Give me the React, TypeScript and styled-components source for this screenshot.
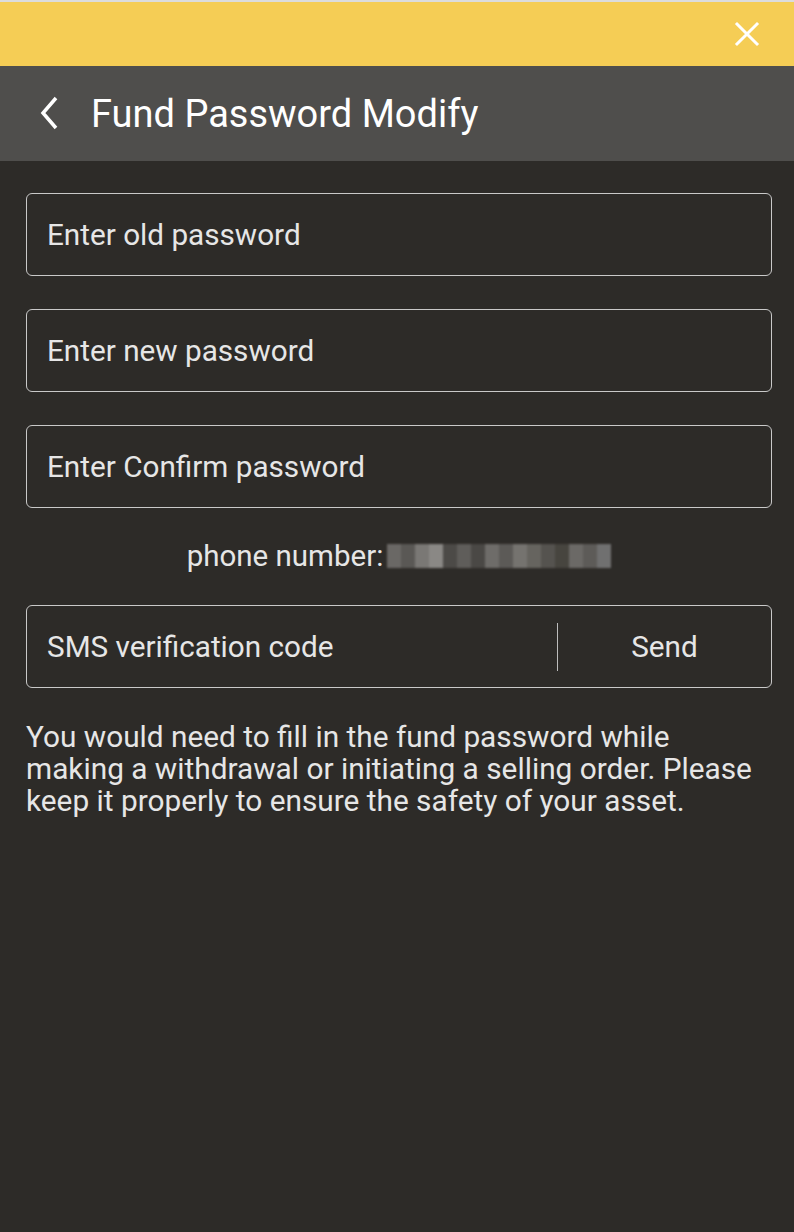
import styled, { createGlobalStyle } from 'styled-components'

const GlobalStyle = createGlobalStyle`
  html, body {
    margin: 0;
    padding: 0;
    background: #2d2b28;
  }
  body {
    font-family: Roboto, "Noto Sans", sans-serif;
  }
`

const blurTones = [
  '#6a6865', '#5a5855', '#7a7875', '#8a8885', '#4c4a47', '#5f5d5a', '#4a4845', '#6e6c69',
  '#5c5a57', '#75736f', '#66645f', '#55534f', '#47453f', '#6b6966', '#5d5b58', '#707070',
]

export default function App() {
  return (
    <>
      <GlobalStyle />
      <Page>
        <TopStrip />
        <Banner>
          <CloseButton aria-label="close">
            <svg width="26" height="26" viewBox="0 0 26 26">
              <path d="M3 3 L23 23 M23 3 L3 23" stroke="#fff" strokeWidth="3" strokeLinecap="square" />
            </svg>
          </CloseButton>
        </Banner>
        <Header>
          <BackButton aria-label="back">
            <svg width="22" height="34" viewBox="0 0 22 34">
              <path d="M18 2 L5 17 L18 32" stroke="#fff" strokeWidth="3.5" fill="none" />
            </svg>
          </BackButton>
          <Title>Fund Password Modify</Title>
        </Header>
        <Body>
          <Field>
            <FieldText>Enter old password</FieldText>
          </Field>
          <Field>
            <FieldText>Enter new password</FieldText>
          </Field>
          <Field>
            <FieldText>Enter Confirm password</FieldText>
          </Field>
          <PhoneRow>
            phone number:
            <Blurred>
              {blurTones.map((c, i) => (
                <BlurCell key={i} style={{ background: c }} />
              ))}
            </Blurred>
          </PhoneRow>
          <Field>
            <FieldText>SMS verification code</FieldText>
            <Divider />
            <SendButton>Send</SendButton>
          </Field>
          <Note>
            You would need to fill in the fund password while making a withdrawal or initiating a selling
            order. Please keep it properly to ensure the safety of your asset.
          </Note>
        </Body>
      </Page>
    </>
  )
}

const Page = styled.div`
  display: flex;
  flex-direction: column;
  min-height: 1232px;
  background: #2d2b28;
`

const TopStrip = styled.div`
  height: 2px;
  background: #dcdcdc;
`

const Banner = styled.div`
  height: 64px;
  background: #f5cd55;
  display: flex;
  justify-content: flex-end;
  align-items: center;
  padding-right: 34px;
`

const CloseButton = styled.div`
  display: flex;
  width: 26px;
  height: 26px;
`

const Header = styled.div`
  height: 95px;
  background: #4f4e4c;
  display: flex;
  align-items: center;
  padding-left: 38px;
  gap: 31px;
`

const BackButton = styled.div`
  display: flex;
  margin-top: -2px;
`

const Title = styled.h1`
  margin: 0;
  font-family: Roboto, sans-serif;
  font-weight: 400;
  font-size: 38px;
  color: #ffffff;
`

const Body = styled.div`
  display: flex;
  flex-direction: column;
  padding: 32px 22px 0 26px;
  gap: 33px;
`

const Field = styled.div`
  height: 83px;
  box-sizing: border-box;
  border: 1px solid #c9c9c9;
  border-radius: 6px;
  display: flex;
  align-items: center;
  padding-left: 20px;
`

const FieldText = styled.span`
  flex: 1;
  font-size: 29.7px;
  color: #e6e6e6;
`

const Divider = styled.div`
  width: 1px;
  height: 48px;
  background: #bdbdbd;
`

const SendButton = styled.span`
  width: 213px;
  text-align: center;
  font-size: 29.7px;
  color: #e6e6e6;
`

const PhoneRow = styled.div`
  display: flex;
  justify-content: center;
  align-items: center;
  font-size: 29.5px;
  color: #e6e6e6;
  height: 30px;
  margin: 0 0 1px;
`

const Blurred = styled.span`
  display: inline-flex;
  margin-left: 4px;
  filter: blur(1px);
`

const BlurCell = styled.span`
  width: 14px;
  height: 24px;
`

const Note = styled.p`
  margin: 0;
  max-width: 735px;
  font-size: 29.8px;
  line-height: 32px;
  color: #e6e6e6;
`
